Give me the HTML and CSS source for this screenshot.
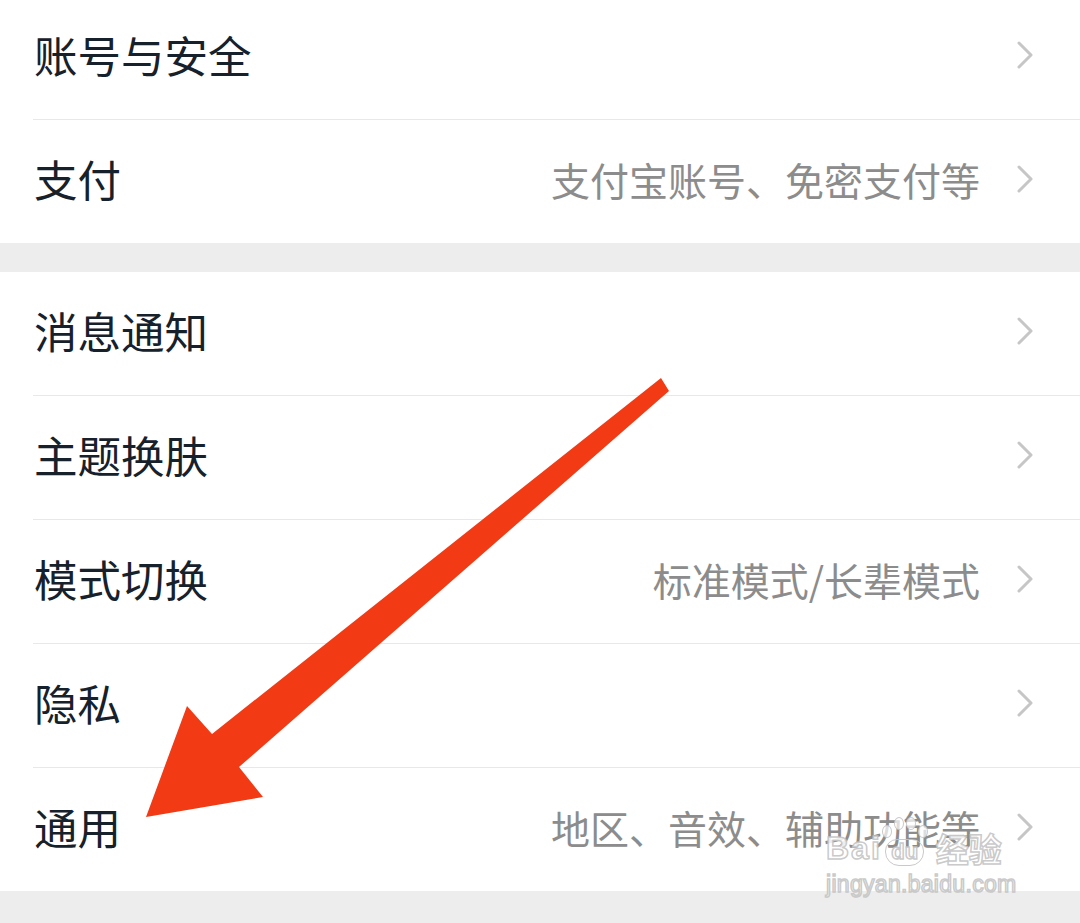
FILE: index.html
```html
<!DOCTYPE html>
<html lang="zh-CN">
<head>
<meta charset="utf-8">
<title>设置</title>
<link rel="stylesheet" href="styles.css">
</head>
<body>
<div class="page">
  <div class="group first-group">
    <div class="row"><div class="cell"><span class="label">账号与安全</span><span class="value"></span><svg class="chev" viewBox="0 0 16 28"><polyline points="2,2 14,14 2,26"/></svg></div></div>
    <div class="row"><div class="cell"><span class="label">支付</span><span class="value">支付宝账号、免密支付等</span><svg class="chev" viewBox="0 0 16 28"><polyline points="2,2 14,14 2,26"/></svg></div></div>
  </div>
  <div class="gap"></div>
  <div class="group">
    <div class="row"><div class="cell"><span class="label">消息通知</span><span class="value"></span><svg class="chev" viewBox="0 0 16 28"><polyline points="2,2 14,14 2,26"/></svg></div></div>
    <div class="row"><div class="cell"><span class="label">主题换肤</span><span class="value"></span><svg class="chev" viewBox="0 0 16 28"><polyline points="2,2 14,14 2,26"/></svg></div></div>
    <div class="row"><div class="cell"><span class="label">模式切换</span><span class="value">标准模式/长辈模式</span><svg class="chev" viewBox="0 0 16 28"><polyline points="2,2 14,14 2,26"/></svg></div></div>
    <div class="row"><div class="cell"><span class="label">隐私</span><span class="value"></span><svg class="chev" viewBox="0 0 16 28"><polyline points="2,2 14,14 2,26"/></svg></div></div>
    <div class="row"><div class="cell"><span class="label">通用</span><span class="value">地区、音效、辅助功能等</span><svg class="chev" viewBox="0 0 16 28"><polyline points="2,2 14,14 2,26"/></svg></div></div>
  </div>
  <div class="gap bottom"></div>

  <svg class="arrow" viewBox="0 0 1080 923" preserveAspectRatio="none">
    <polygon points="661,378 669,391 239,767 263,797 146,817 187,706 212,734"/>
  </svg>

  <div class="watermark">
    <div class="wm-top">
      <span class="wm-bai">Bai</span>
      <span class="wm-paw">
        <span class="toes"><i></i><i></i><i></i><i></i></span>
        <span class="wm-du">du</span>
      </span>
      <span class="wm-jy">经验</span>
    </div>
    <div class="wm-url">jingyan.baidu.com</div>
  </div>
</div>
</body>
</html>
```

FILE: styles.css
```css
html, body {
  margin: 0;
  padding: 0;
  background: #ffffff;
}
body {
  font-family: "Noto Sans CJK SC", "Noto Sans", sans-serif;
  overflow: hidden;
}
.page {
  position: relative;
  width: 1080px;
  height: 923px;
  overflow: hidden;
  background: #ededed;
}
.group {
  background: #ffffff;
}
.first-group {
  margin-top: -4px;
}
.row {
  padding-left: 33px;
}
.cell {
  height: 118px;
  padding-bottom: 5px;
  display: flex;
  align-items: center;
  padding-right: 47px;
  border-top: 1px solid #e8e8e8;
}
.row:first-child .cell {
  border-top: none;
}
.label {
  flex: 1;
  font-size: 43.5px;
  color: #16212b;
  line-height: 1;
  padding-left: 1px;
}
.value {
  font-size: 39px;
  color: #8c8c8c;
  line-height: 1;
  margin-right: 37px;
}
.chev {
  width: 16px;
  height: 28px;
  fill: none;
  stroke: #c6c6c6;
  stroke-width: 3;
  stroke-linecap: round;
  stroke-linejoin: round;
}
.gap {
  height: 29px;
  background: #ededed;
}
.arrow {
  position: absolute;
  left: 0;
  top: 0;
  width: 1080px;
  height: 923px;
}
.arrow polygon {
  fill: #f23a14;
}
.watermark {
  position: absolute;
  left: 826px;
  top: 804px;
  width: 200px;
  font-family: "Liberation Sans", Arial, sans-serif;
  color: rgba(255, 255, 255, 0.85);
  -webkit-text-stroke: 1.5px rgba(195, 195, 195, 0.9);
}
.wm-top {
  display: flex;
  align-items: flex-end;
  height: 62px;
}
.wm-bai {
  font-size: 32px;
  font-weight: bold;
  letter-spacing: 2px;
  line-height: 1;
  padding-bottom: 2px;
}
.wm-paw {
  display: flex;
  flex-direction: column;
  align-items: center;
  margin-left: 2px;
  width: 42px;
}
.toes {
  display: flex;
  gap: 2px;
  margin-bottom: 1px;
}
.toes i {
  width: 8px;
  height: 11px;
  border: 1.5px solid rgba(195, 195, 195, 0.9);
  border-radius: 50%;
  background: rgba(255, 255, 255, 0.7);
}
.toes i:nth-child(1), .toes i:nth-child(4) {
  margin-top: 8px;
}
.wm-du {
  font-size: 22px;
  font-weight: bold;
  line-height: 1;
  border: 1.5px solid rgba(195, 195, 195, 0.9);
  border-radius: 12px 12px 14px 14px;
  padding: 1px 5px 2px;
}
.wm-jy {
  font-family: "Noto Sans CJK SC", sans-serif;
  font-size: 33px;
  font-weight: bold;
  line-height: 1;
  margin-left: 10px;
  padding-bottom: 1px;
}
.wm-url {
  font-size: 23px;
  line-height: 1;
  margin-top: 7px;
  letter-spacing: 0.3px;
}
```
